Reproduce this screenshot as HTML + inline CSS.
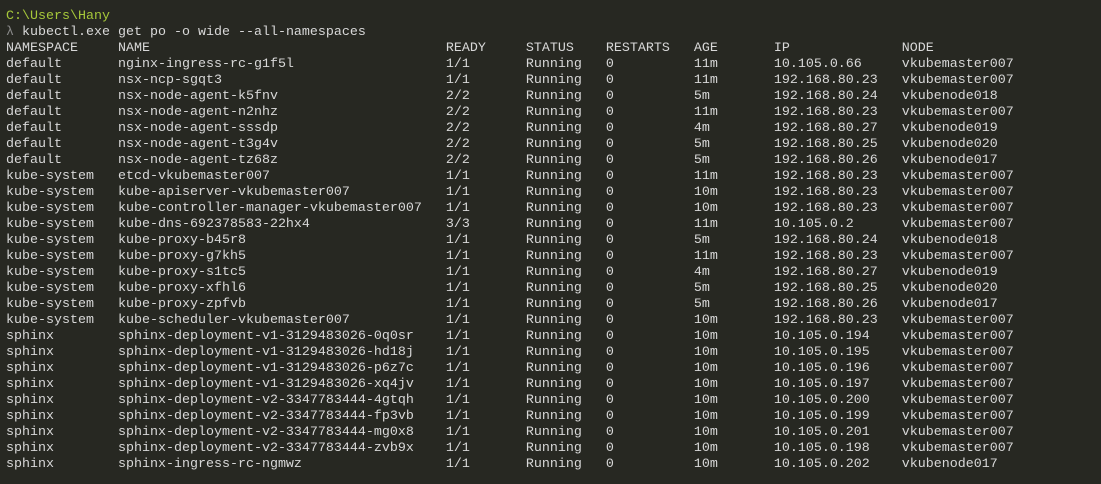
<!DOCTYPE html><html><head><style>
html,body{margin:0;padding:0;background:#272822;width:1101px;height:484px;overflow:hidden}
pre{margin:0;position:absolute;left:6px;top:9px;font-family:"Liberation Mono",monospace;font-size:13.33px;line-height:16px;color:#d8d8d8}
.g{color:#a6c83a}.l{color:#8a8a8a}
</style></head><body><pre><span class="g">C:\Users\Hany</span>
<span class="l">λ</span> kubectl.exe get po -o wide --all-namespaces
NAMESPACE     NAME                                     READY     STATUS    RESTARTS   AGE       IP              NODE
default       nginx-ingress-rc-g1f5l                   1/1       Running   0          11m       10.105.0.66     vkubemaster007
default       nsx-ncp-sgqt3                            1/1       Running   0          11m       192.168.80.23   vkubemaster007
default       nsx-node-agent-k5fnv                     2/2       Running   0          5m        192.168.80.24   vkubenode018
default       nsx-node-agent-n2nhz                     2/2       Running   0          11m       192.168.80.23   vkubemaster007
default       nsx-node-agent-sssdp                     2/2       Running   0          4m        192.168.80.27   vkubenode019
default       nsx-node-agent-t3g4v                     2/2       Running   0          5m        192.168.80.25   vkubenode020
default       nsx-node-agent-tz68z                     2/2       Running   0          5m        192.168.80.26   vkubenode017
kube-system   etcd-vkubemaster007                      1/1       Running   0          11m       192.168.80.23   vkubemaster007
kube-system   kube-apiserver-vkubemaster007            1/1       Running   0          10m       192.168.80.23   vkubemaster007
kube-system   kube-controller-manager-vkubemaster007   1/1       Running   0          10m       192.168.80.23   vkubemaster007
kube-system   kube-dns-692378583-22hx4                 3/3       Running   0          11m       10.105.0.2      vkubemaster007
kube-system   kube-proxy-b45r8                         1/1       Running   0          5m        192.168.80.24   vkubenode018
kube-system   kube-proxy-g7kh5                         1/1       Running   0          11m       192.168.80.23   vkubemaster007
kube-system   kube-proxy-s1tc5                         1/1       Running   0          4m        192.168.80.27   vkubenode019
kube-system   kube-proxy-xfhl6                         1/1       Running   0          5m        192.168.80.25   vkubenode020
kube-system   kube-proxy-zpfvb                         1/1       Running   0          5m        192.168.80.26   vkubenode017
kube-system   kube-scheduler-vkubemaster007            1/1       Running   0          10m       192.168.80.23   vkubemaster007
sphinx        sphinx-deployment-v1-3129483026-0q0sr    1/1       Running   0          10m       10.105.0.194    vkubemaster007
sphinx        sphinx-deployment-v1-3129483026-hd18j    1/1       Running   0          10m       10.105.0.195    vkubemaster007
sphinx        sphinx-deployment-v1-3129483026-p6z7c    1/1       Running   0          10m       10.105.0.196    vkubemaster007
sphinx        sphinx-deployment-v1-3129483026-xq4jv    1/1       Running   0          10m       10.105.0.197    vkubemaster007
sphinx        sphinx-deployment-v2-3347783444-4gtqh    1/1       Running   0          10m       10.105.0.200    vkubemaster007
sphinx        sphinx-deployment-v2-3347783444-fp3vb    1/1       Running   0          10m       10.105.0.199    vkubemaster007
sphinx        sphinx-deployment-v2-3347783444-mg0x8    1/1       Running   0          10m       10.105.0.201    vkubemaster007
sphinx        sphinx-deployment-v2-3347783444-zvb9x    1/1       Running   0          10m       10.105.0.198    vkubemaster007
sphinx        sphinx-ingress-rc-ngmwz                  1/1       Running   0          10m       10.105.0.202    vkubenode017</pre></body></html>
